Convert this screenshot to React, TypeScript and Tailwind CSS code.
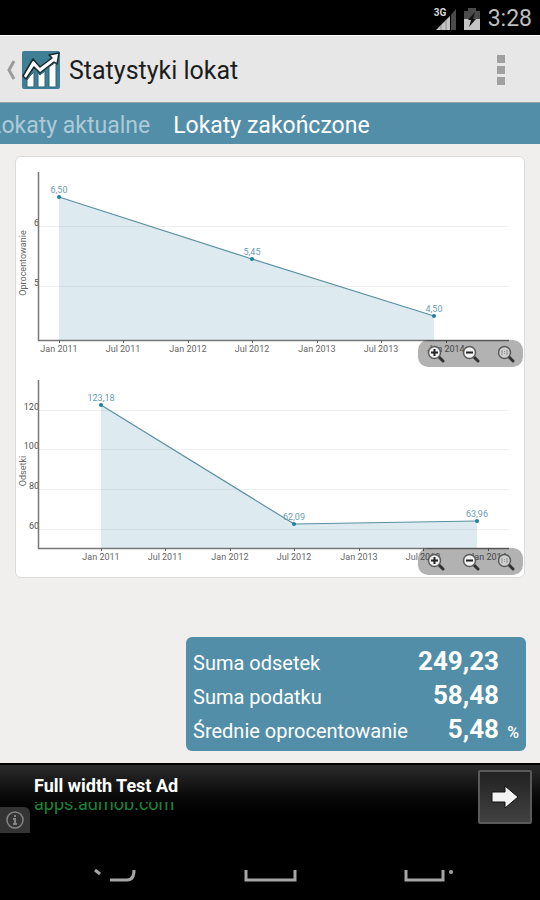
import { useState } from 'react';
import clsx from 'clsx';

interface Point {
    x: number;
    y: number;
    label: string;
}

interface Tick {
    pos: number;
    label: string;
}

interface LineChartProps {
    title: string;
    titleY: number;
    points: Point[];
    xTicks: Tick[];
    yTicks: Tick[];
}

const TABS = ['Lokaty aktualne', 'Lokaty zakończone'];

const RATE_CHART: LineChartProps = {
    title: 'Oprocentowanie',
    titleY: 104,
    points: [
        { x: 43, y: 38, label: '6,50' },
        { x: 236, y: 100, label: '5,45' },
        { x: 418, y: 157, label: '4,50' },
    ],
    xTicks: [
        { pos: 43, label: 'Jan 2011' },
        { pos: 107, label: 'Jul 2011' },
        { pos: 172, label: 'Jan 2012' },
        { pos: 236, label: 'Jul 2012' },
        { pos: 301, label: 'Jan 2013' },
        { pos: 365, label: 'Jul 2013' },
        { pos: 430, label: 'Jan 2014' },
    ],
    yTicks: [
        { pos: 67, label: '6' },
        { pos: 127, label: '5' },
    ],
};

const INTEREST_CHART: LineChartProps = {
    title: 'Odsetki',
    titleY: 104,
    points: [
        { x: 85, y: 38, label: '123,18' },
        { x: 278, y: 157, label: '62,09' },
        { x: 461, y: 154, label: '63,96' },
    ],
    xTicks: [
        { pos: 85, label: 'Jan 2011' },
        { pos: 149, label: 'Jul 2011' },
        { pos: 214, label: 'Jan 2012' },
        { pos: 278, label: 'Jul 2012' },
        { pos: 343, label: 'Jan 2013' },
        { pos: 407, label: 'Jul 2013' },
        { pos: 472, label: 'Jan 2014' },
    ],
    yTicks: [
        { pos: 43, label: '120' },
        { pos: 82, label: '100' },
        { pos: 122, label: '80' },
        { pos: 162, label: '60' },
    ],
};

const SUMMARY = [
    { label: 'Suma odsetek', value: '249,23', unit: '' },
    { label: 'Suma podatku', value: '58,48', unit: '' },
    { label: 'Średnie oprocentowanie', value: '5,48', unit: '%' },
];

function StatusBar() {
    return (
        <div className="flex h-[35px] items-center justify-end bg-black pt-0.5 pr-2 text-[#bebebe]">
            {/* Signal strength with the network type above it */}
            <div className="relative mr-2 h-6 w-6">
                <svg className="h-6 w-6" viewBox="0 0 24 24">
                    <path d="M4 23 L18 9 V23 Z" fill="#c4c4c4" />
                    <path d="M19 8 L24 2 V23 H19 Z" fill="#4a4a4a" />
                    <path d="M9 18 V23 M14 13 V23" stroke="#8b8b8b" />
                </svg>
                <span className="absolute top-0 left-0.5 text-[10px] leading-3 font-bold text-[#d6d6d6]">3G</span>
            </div>
            {/* Battery */}
            <svg className="mr-2 h-6 w-4" viewBox="0 0 16 24">
                <path d="M4 1 H12 V4 H16 V13 H0 V4 H4 Z" fill="#4a4a4a" />
                <path d="M0 12 H16 V23 H0 Z" fill="#c4c4c4" />
                <path d="M11 5 L4 13 H7 L5 20 L12 12 H9 Z" fill="#111111" />
            </svg>
            <span className="text-[23px] leading-6">3:28</span>
        </div>
    );
}

function AppLogo() {
    return (
        <svg className="h-[38px] w-[38px]" viewBox="0 0 38 38">
            <rect width="38" height="38" rx="2" fill="#3f7f96" />
            <path
                d="M5 29 L8 25 L12 21 V36 H5 Z M16 22 L18 24 L23 20 V36 H16 Z M27 16 L34 11 V36 H27 Z"
                fill="#ffffff"
                stroke="#2c6478"
            />
            <path
                d="M1 25 L11 8 L18 16 L30 7 L27 4 L37 2 L35 13 L32 11 L18 22 L12 16 L4 28 Z"
                fill="#ffffff"
                stroke="#1d2b30"
                strokeWidth="1.500"
                strokeLinejoin="round"
            />
        </svg>
    );
}

function Header() {
    return (
        <header className="flex h-[68px] items-center border-t border-b border-t-white border-b-[#9aa5aa] bg-[#e7e7e7] pt-0.5 pr-[27px] pl-1.5">
            <button type="button" aria-label="Wstecz" className="flex items-center">
                <svg className="mr-1.5 h-5 w-2.5" viewBox="0 0 10 20">
                    <path d="M8 1 L3 10 L8 19" fill="none" stroke="#9b9b9b" strokeWidth="3" />
                </svg>
                <AppLogo />
            </button>
            <h1 className="ml-[9px] flex-1 pt-0.5 text-[25px] leading-8 text-[#1c1c1c]">Statystyki lokat</h1>
            <button type="button" aria-label="Menu" className="flex w-6 flex-col items-center gap-[3px]">
                <span className="h-2 w-2 bg-[#a0a0a0]" />
                <span className="h-2 w-2 bg-[#a0a0a0]" />
                <span className="h-2 w-2 bg-[#a0a0a0]" />
            </button>
        </header>
    );
}

function ZoomControls() {
    return (
        <div className="absolute right-px bottom-0 flex h-[27px] w-[105px] items-center rounded-[10px] bg-black/30">
            {['+', '-', '1:1'].map((kind) => (
                <button key={kind} type="button" aria-label={kind} className="flex flex-1 justify-center">
                    <svg className="h-[18px] w-[18px]" viewBox="0 0 18 18">
                        <path d="M11 11 L16 16" stroke="#333333" strokeWidth="3" strokeLinecap="round" />
                        <circle
                            cx="7.500"
                            cy="7.500"
                            r="6"
                            fill={kind === '1:1' ? '#d0d0d0' : '#f1f1f1'}
                            stroke="#5a5a5a"
                            strokeWidth="1.500"
                        />
                        {kind === '+' && <path d="M4 7.500 H11 M7.500 4 V11" stroke="#222222" strokeWidth="2" />}
                        {kind === '-' && <path d="M4 7.500 H11" stroke="#222222" strokeWidth="2" />}
                        {kind === '1:1' && (
                            <path d="M5 5 V10 M10 5 V10 M7.500 6 V7 M7.500 8 V9" stroke="#8a8a8a" strokeWidth="1" />
                        )}
                    </svg>
                </button>
            ))}
        </div>
    );
}

function LineChart({ title, titleY, points, xTicks, yTicks }: LineChartProps) {
    const line = points.map((p) => `${p.x},${p.y}`).join(' ');
    const first = points[0];
    const last = points[points.length - 1];

    return (
        <div className="relative">
            <svg className="block w-full text-[9px]" viewBox="0 0 508 208">
                {/* Area under the line */}
                <polygon points={`${first.x},181 ${line} ${last.x},181`} fill="#ddeaef" />

                {yTicks.map((tick) => (
                    <g key={tick.label}>
                        <path d={`M22 ${tick.pos}.5 H493`} stroke="#000000" strokeOpacity="0.06" />
                        <text x="23" y={tick.pos} textAnchor="end" fill="#555555">
                            {tick.label}
                        </text>
                    </g>
                ))}

                {/* Axes */}
                <path d="M22.500 13 V181.500 H493" fill="none" stroke="#777777" strokeWidth="1.500" />

                {xTicks.map((tick) => (
                    <g key={tick.label}>
                        <path d={`M${tick.pos}.5 181 V184`} stroke="#666666" />
                        <text x={tick.pos} y="193" textAnchor="middle" fill="#666666">
                            {tick.label}
                        </text>
                    </g>
                ))}

                <polyline points={line} fill="none" stroke="#5c8f9f" strokeWidth="1.200" />
                {points.map((p) => (
                    <g key={p.label}>
                        <circle cx={p.x} cy={p.y} r="2" fill="#1f7f9e" />
                        <text x={p.x} y={p.y - 4} textAnchor="middle" fill="#6b9dad">
                            {p.label}
                        </text>
                    </g>
                ))}

                <text transform={`translate(10 ${titleY}) rotate(-90)`} textAnchor="middle" fill="#666666">
                    {title}
                </text>
            </svg>
            <ZoomControls />
        </div>
    );
}

function AdBanner() {
    return (
        <aside className="relative flex h-[70px] items-start justify-between border-t-2 border-black bg-linear-to-b from-[#2b2c2b] to-black to-90% pt-[5px] pr-2 pl-[34px]">
            <a href="#ad" className="block pt-1">
                <span className="block text-[18px] leading-6 font-bold text-white">Full width Test Ad</span>
                {/* Second line only has room for its lower half */}
                <span className="mt-1 flex h-3.5 items-end overflow-hidden text-[18px] leading-6 text-[#16853c]">
                    apps.admob.com
                </span>
            </a>
            <button
                type="button"
                aria-label="Otwórz"
                className="flex h-[54px] w-[54px] items-center justify-center rounded-xs border-2 border-[#5a5a5a] bg-linear-to-b from-[#222222] to-[#424242]"
            >
                <svg className="h-6 w-7" viewBox="0 0 28 24">
                    <path d="M1 7 H14 V1 L27 12 L14 23 V17 H1 Z" fill="#f2f2f2" stroke="#111111" />
                </svg>
            </button>
            <button
                type="button"
                aria-label="Informacje"
                className="absolute bottom-0 left-0 flex h-[26px] w-[30px] items-center justify-center rounded-tr-md bg-[#343434]"
            >
                <svg className="h-[18px] w-[18px]" viewBox="0 0 18 18">
                    <circle cx="9" cy="9" r="8" fill="none" stroke="#858585" strokeWidth="1.500" />
                    <path d="M9 4 V6 M7 8 H9 V13 M7 13 H11" fill="none" stroke="#858585" strokeWidth="2" />
                </svg>
            </button>
        </aside>
    );
}

function NavigationBar() {
    return (
        <nav className="flex flex-1 items-start justify-between bg-black px-[83px] pt-8 pb-4">
            <button type="button" aria-label="Wstecz">
                <svg className="h-5 w-16" viewBox="0 0 64 20" fill="none" stroke="#a6a6a6" strokeWidth="3">
                    <path d="M12 5 L17 9" />
                    <path d="M27 15 H44 Q51 15 51 5" />
                </svg>
            </button>
            <button type="button" aria-label="Ekran główny">
                <svg className="h-5 w-16" viewBox="0 0 64 20" fill="none" stroke="#a6a6a6" strokeWidth="3">
                    <path d="M8 5 V15 H57 V5" />
                </svg>
            </button>
            <button type="button" aria-label="Ostatnie">
                <svg className="h-5 w-16" viewBox="0 0 64 20" fill="none" stroke="#a6a6a6" strokeWidth="3">
                    <path d="M13 5 V15 H50 V5" />
                    <circle cx="58" cy="7" r="2" fill="#a6a6a6" stroke="none" />
                </svg>
            </button>
        </nav>
    );
}

export default function App() {
    const [activeTab, setActiveTab] = useState(1);

    return (
        <div className="flex min-h-screen flex-col overflow-hidden bg-[#f1efed] font-['Roboto','Liberation_Sans',sans-serif]">
            <StatusBar />
            <Header />

            {/* Tabs */}
            <div className="flex h-[41px] items-center gap-[23px] bg-[#528ea8] pt-1 text-[23px] whitespace-nowrap">
                {TABS.map((tab, i) => (
                    <button
                        key={tab}
                        type="button"
                        onClick={() => setActiveTab(i)}
                        className={clsx(
                            'leading-8 first:-ml-[11px]',
                            activeTab === i ? 'text-white' : 'text-[#adcad8]'
                        )}
                    >
                        {tab}
                    </button>
                ))}
            </div>

            <main className="flex flex-col px-[15px] py-3">
                <section className="rounded-md border border-[#dddbda] bg-white py-0.5">
                    <LineChart {...RATE_CHART} />
                    <LineChart {...INTEREST_CHART} />
                </section>

                {/* Summary */}
                <section className="mt-[59px] -mr-px w-[340px] self-end rounded-md bg-[#528ea8] px-[7px] pt-2 pb-0.5 text-white">
                    <table className="w-full">
                        <tbody>
                            {SUMMARY.map((row) => (
                                <tr key={row.label} className="align-baseline">
                                    <th scope="row" className="text-left text-[20px] leading-8 font-normal whitespace-nowrap">
                                        {row.label}
                                    </th>
                                    <td className="text-right text-[26px] leading-8 font-bold">{row.value}</td>
                                    <td className="w-5 text-right text-base leading-8 font-medium">{row.unit}</td>
                                </tr>
                            ))}
                        </tbody>
                    </table>
                </section>
            </main>

            <AdBanner />
            <NavigationBar />
        </div>
    );
}
